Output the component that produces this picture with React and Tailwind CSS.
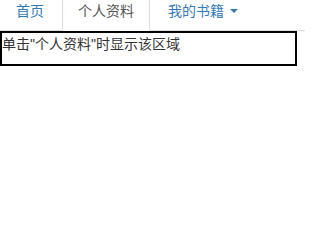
export default function App() {
  const font = { fontFamily: '"Liberation Sans", "Noto Sans CJK SC", sans-serif' };
  return (
    <div className="bg-white w-[305px] h-[201px] overflow-hidden text-[14px] leading-[20px] text-[#333]" style={font}>
      <ul className="flex mt-[-11px] border-b border-[#ddd]">
        <li className="mb-[-1px]">
          <a className="block mr-[2px] px-[15px] pt-[11px] pb-[9px] border border-transparent text-[#337ab7]">首页</a>
        </li>
        <li className="mb-[-1px]">
          <a className="block mr-[2px] px-[15px] pt-[11px] pb-[9px] border border-[#ddd] border-b-transparent bg-white text-[#555]">个人资料</a>
        </li>
        <li className="mb-[-1px]">
          <a className="flex items-center mr-[2px] px-[15px] pt-[11px] pb-[9px] border border-transparent text-[#337ab7]">
            我的书籍
            <span className="ml-[6px] inline-block w-0 h-0 border-l-[4px] border-r-[4px] border-t-[4px] border-l-transparent border-r-transparent border-t-[#337ab7]"></span>
          </a>
        </li>
      </ul>
      <div className="w-[297px] h-[35px] border-2 border-black pt-[1px]">单击"个人资料"时显示该区域</div>
    </div>
  );
}
